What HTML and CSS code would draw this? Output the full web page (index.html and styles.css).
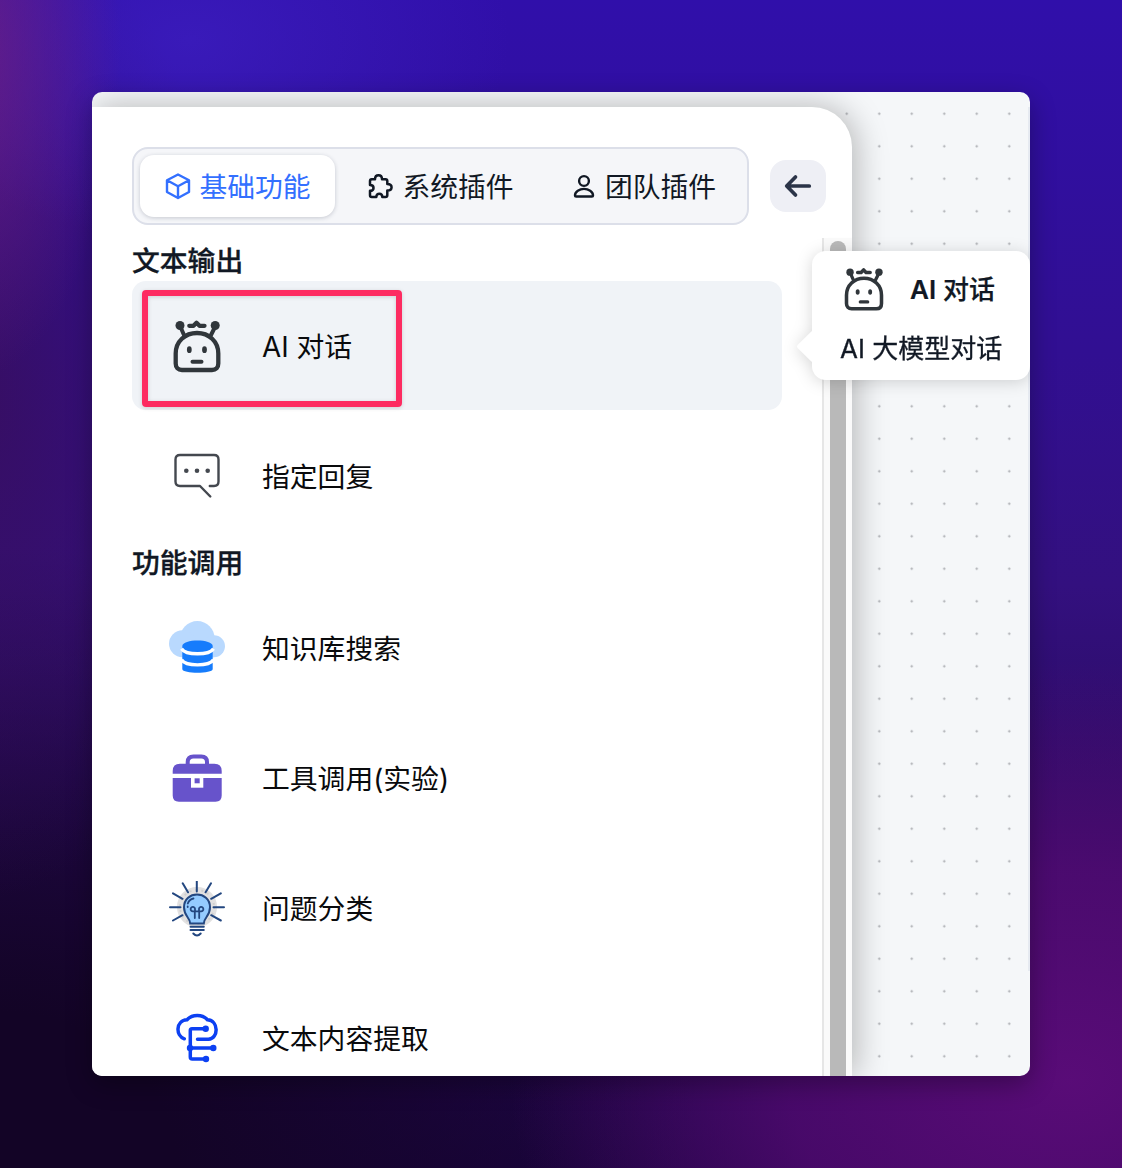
FILE: index.html
```html
<!DOCTYPE html>
<html lang="zh-CN">
<head>
<meta charset="utf-8">
<title>基础功能</title>
<link rel="stylesheet" href="styles.css">
</head>
<body>
<svg class="defs" aria-hidden="true">
  <symbol id="robot" viewBox="0 0 56 56">
    <g fill="none" stroke="#30363b" stroke-width="4.3" stroke-linecap="round" stroke-linejoin="round">
      <path d="M6.700 35.500C6.700 23.500 16 15 28 15S49.300 23.500 49.300 35.500V45.500C49.300 49.500 47 52 43 52H13C9 52 6.700 49.500 6.700 45.500Z"/>
      <path d="M11.500 9L15 17M46 9L42 17" stroke-width="4"/>
      <path d="M20.300 7.800H24.500L27.500 4.700L30.500 7.800H35.500" stroke-width="4.300"/>
      <path d="M23.500 43.700H32.500" stroke-width="4"/>
    </g>
    <g fill="#30363b"><circle cx="11" cy="7.500" r="4.500"/><circle cx="46.200" cy="7.500" r="4.500"/><ellipse cx="20.300" cy="31.700" rx="2.400" ry="3.400"/><ellipse cx="35.500" cy="31.700" rx="2.400" ry="3.400"/></g>
  </symbol>
</svg>
<main class="window">
  <aside class="panel">
    <header class="header">
      <nav class="tabs">
        <button class="tab active">
          <svg width="26" height="28" viewBox="0 0 26 28" fill="none" stroke="currentColor" stroke-width="2.400" stroke-linejoin="round" stroke-linecap="round"><path d="M13 2.500L24 8.300V20L13 26L2 20V8.300ZM2.500 8.500L13 14.300L23.500 8.500M13 14.300V26"/></svg>
          <span>基础功能</span>
        </button>
        <button class="tab">
          <svg width="26" height="28" viewBox="0 0 26 28" fill="none" stroke="currentColor" stroke-width="2.500" stroke-linejoin="round"><path d="M7 7.300C7 1.800 14 1.800 14 7.300H17.500Q19.300 7.300 19.300 9V12C25 12 25 18.500 19.300 18.500V23.300Q19.300 25 17.500 25H14.300C14.300 20.500 8.300 20.500 8.300 25H3.700Q2 25 2 23.300V18.800C6.700 18.800 6.700 13 2 13V9Q2 7.300 3.700 7.300Z"/></svg>
          <span>系统插件</span>
        </button>
        <button class="tab">
          <svg width="24" height="28" viewBox="0 0 24 28" fill="none" stroke="currentColor" stroke-width="2.400" stroke-linejoin="round"><circle cx="12" cy="9" r="4.900"/><path d="M12 16.900C7.500 16.900 3 19.700 3 23.200Q3 24.500 4.300 24.500H19.700Q21 24.500 21 23.200C21 19.700 16.500 16.900 12 16.900Z"/></svg>
          <span>团队插件</span>
        </button>
      </nav>
      <button class="back" aria-label="返回">
        <svg width="28" height="24" viewBox="0 0 28 24" fill="none" stroke="#2b3448" stroke-width="3.700" stroke-linecap="round" stroke-linejoin="round"><path d="M11.500 3L2.700 12L11.500 21M3.500 12H25.300"/></svg>
      </button>
    </header>
    <div class="scroller">
      <div class="list">
        <h2 class="first">文本输出</h2>
        <div class="row selected"><svg class="icon"><use href="#robot"/></svg><span>AI 对话</span><i class="highlight"></i></div>
        <div class="row reply">
          <svg class="icon" viewBox="0 0 56 56" fill="none" stroke="#44484f" stroke-width="2.400" stroke-linecap="round" stroke-linejoin="round"><path d="M41.300 48.500L31 38H11Q6.500 38 6.500 33.500V11.500Q6.500 7 11 7H45Q49.500 7 49.500 11.500V33.500Q49.500 38 45 38H40.800"/><g fill="#44484f" stroke="none"><circle cx="17.300" cy="22.700" r="2.300"/><circle cx="28" cy="22.700" r="2.300"/><circle cx="38.700" cy="22.700" r="2.300"/></g></svg>
          <span>指定回复</span>
        </div>
        <h2>功能调用</h2>
        <div class="row">
          <svg class="icon" viewBox="0 0 56 56"><g fill="#b9d9fe"><circle cx="28.300" cy="17.400" r="17.300"/><circle cx="13.500" cy="22.800" r="13.500"/><circle cx="45" cy="25.300" r="11"/><path d="M13.500 22H45V36.300H13.500Z"/></g><path fill="#167cfc" d="M13.300 25C13.300 17.500 43.700 17.500 43.700 25V48C43.700 53 13.300 53 13.300 48Z"/><path d="M12.500 27.700C17 34.500 40 34.500 44.500 27.700M12.500 38.800C17 45.600 40 45.600 44.500 38.800" fill="none" stroke="#fff" stroke-width="3.400"/></svg>
          <span>知识库搜索</span>
        </div>
        <div class="row">
          <svg class="icon" viewBox="0 0 56 56" fill="#6753cb"><path d="M18.700 14V11Q18.700 5.400 24.500 5.400H32.300Q38 5.400 38 11V14" fill="none" stroke="#6753cb" stroke-width="4"/><path d="M3.700 22.700V20Q3.700 12.700 11 12.700H45.400Q52.700 12.700 52.700 20V22.700ZM3.700 27H52.700V44.500Q52.700 50.700 46.500 50.700H9.900Q3.700 50.700 3.700 44.500Z"/><path fill="#fff" d="M22 26H34.300V36.700H22Z"/><path d="M25.600 27.300H30.700V32.300H25.600Z"/></svg>
          <span>工具调用(实验)</span>
        </div>
        <div class="row">
          <svg class="icon" viewBox="0 0 56 56" fill="none" stroke="#234780" stroke-width="2" stroke-linecap="round"><circle cx="28" cy="26" r="16.500" stroke="#e2e1e1" stroke-width="7"/><circle cx="28" cy="26" r="17" stroke="#cfcfd0" stroke-width="2" stroke-dasharray="2 4" stroke-linecap="butt"/><path d="M27.800 0V10.500M13.700 2.300L19 11.300M42 2.300L36.600 11.300M4 12.300L13.500 17.800M51.800 12.300L42.200 17.800M1 26.300H11.500M44.500 26.300H55M4 39.500L13.500 34.200M51.800 39.500L42.200 34.200"/><path fill="#94cbff" d="M21.200 42.500C21.200 36.500 15 35.500 15 26.300C15 9.200 41 9.200 41 26.300C41 35.500 34.800 36.500 34.800 42.500Z"/><path d="M18.800 22.500Q20.200 18.500 24.500 17.500M18.700 25.500V26M25.800 37V30M30.200 37V30M26 30.300H23.800A2.200 2.200 0 1 1 26 28.500V30.300H30V28.500A2.200 2.200 0 1 1 32.200 30.300H30" stroke-width="1.800"/><path d="M21.500 45.700H34.800M21.500 49H34.800M24.300 52.500Q28 56.500 31.700 52.500"/></svg>
          <span>问题分类</span>
        </div>
        <div class="row">
          <svg class="icon" viewBox="0 0 56 56" fill="none" stroke="#0c40f2" stroke-width="3.500" stroke-linecap="round" stroke-linejoin="round"><path d="M15.300 27.800C6.500 25 6.500 9.500 18 8.800C23 3 33.500 3 38.500 8.800C49.800 9.500 49.800 27.500 39.500 28.300H28.500M36.700 17.700H23Q21.300 17.700 21.300 19.500V46Q21.300 48 23.300 48H37M21.300 37H44"/><g fill="#0c40f2" stroke="none"><circle cx="36.700" cy="17.700" r="3.200"/><circle cx="44.300" cy="37" r="3.200"/><circle cx="21" cy="37" r="3.200"/><circle cx="37" cy="48" r="3.200"/></g></svg>
          <span>文本内容提取</span>
        </div>
      </div>
      <div class="track"><div class="thumb"></div></div>
    </div>
  </aside>
  <div class="canvas"></div>
  <div class="tooltip">
    <div class="tip-title"><svg class="tip-icon"><use href="#robot"/></svg><strong><b>AI</b> 对话</strong></div>
    <p>AI 大模型对话</p>
  </div>
</main>
</body>
</html>
```
FILE: styles.css
```css
* { box-sizing: border-box; }
body {
  margin: 0;
  width: 1122px;
  height: 1168px;
  padding: 92px;
  overflow: hidden;
  font-family: Inter, "Noto Sans CJK SC", sans-serif;
  line-height: 1.4;
  color: #111824;
  background:
    radial-gradient(ellipse 150px 330px at -30px 50px, rgba(112, 32, 130, .8), transparent),
    radial-gradient(ellipse 320px 200px at 190px 40px, rgba(62, 32, 195, .65), transparent),
    radial-gradient(ellipse 260px 500px at -20px 400px, rgba(56, 14, 88, .8), transparent),
    radial-gradient(ellipse 560px 420px at 1070px 1080px, rgba(92, 12, 122, .95), rgba(86, 11, 118, .75) 50%, transparent),
    radial-gradient(ellipse 700px 620px at 0 1168px, #130426 25%, transparent),
    linear-gradient(to bottom, #300faa 0, #310f92 30%, #33107f 50%, #280a59 75%, #1b0440);
}
.defs { position: absolute; width: 0; height: 0; }
button { border: 0; padding: 0; background: none; font: inherit; color: inherit; }
svg { display: block; flex: none; }
.window {
  position: relative;
  width: 938px;
  height: 984px;
  padding-top: 15px;
  display: flex;
  overflow: hidden;
  border-radius: 10px;
  background-color: #f5f7f9;
  background-image: radial-gradient(circle at 16.250px 16.250px, #a9abb0 .7px, transparent 1.500px);
  background-size: 32.500px 32.500px;
  background-position: -9px 5.500px;
}
body::before {
  content: "";
  position: absolute;
  inset: 92px;
  width: 938px;
  height: 984px;
  border-radius: 10px;
  box-shadow: 0 8px 26px rgba(0, 0, 0, .32);
}
.panel {
  width: 760px;
  flex: none;
  padding: 40px 0 0 40px;
  display: flex;
  flex-direction: column;
  border-top-right-radius: 40px;
  background: #fff;
  box-shadow: 4px 0 32px rgba(0, 0, 0, .27);
}
.canvas { flex: 1; margin: 0 0 105px; border-right: 2px solid #e6eaf1; }
.header { display: flex; align-items: center; gap: 21px; height: 78px; flex: none; }
.tabs {
  display: flex;
  gap: 8px;
  width: 617px;
  height: 78px;
  padding: 6px;
  border: 2px solid #dcdfe9;
  border-radius: 16px;
  background: #f5f6f9;
}
.tab {
  flex: 1;
  height: 62px;
  padding-left: 1px;
  display: flex;
  align-items: center;
  justify-content: center;
  gap: 8px;
  border-radius: 14px;
  font-size: 27.800px;
  white-space: nowrap;
}
.tab:last-child { gap: 9px; }
.tab span { padding-top: 3px; }
.tab.active { color: #3370ff; background: #fff; box-shadow: 0 1px 4px rgba(30, 40, 70, .22); }
.back {
  width: 56px;
  height: 52px;
  display: grid;
  place-items: center;
  border-radius: 16px;
  background: #eeeff5;
}
.scroller { flex: 1; display: flex; justify-content: space-between; margin-top: 13px; min-height: 0; }
.list { width: 650px; }
h2 {
  height: 43px;
  margin: 0;
  font-size: 27.800px;
  line-height: 45px;
  font-weight: 500;
  -webkit-text-stroke: .3px currentColor;
}
h2.first { line-height: 47px; }
.row {
  position: relative;
  height: 130px;
  padding-left: 37px;
  display: flex;
  align-items: center;
  gap: 37px;
  border-radius: 14px;
  color: #090a0c;
  font-size: 27.800px;
}
.selected { height: 129px; margin-bottom: 1px; background: #f0f3f7; }
.selected span { padding-top: 4px; }
.reply span { padding-top: 2px; }
.icon { width: 56px; height: 56px; }
.highlight {
  position: absolute;
  left: 10px;
  top: 9px;
  width: 260px;
  height: 117px;
  border: 6px solid #fd2b61;
  border-radius: 4px;
  box-shadow: 0 1px 4px rgba(0, 0, 0, .15), inset 0 1px 4px rgba(0, 0, 0, .15);
}
.track { width: 30px; padding: 3px 6px 0; border-left: 2px solid #e6e6e6; background: #fafafa; }
.thumb { width: 16px; height: 100%; border-radius: 8px 8px 0 0; background: #b9b9b9; }
.tooltip {
  position: absolute;
  left: 720px;
  top: 159px;
  width: 218px;
  height: 129px;
  padding: 15px 0 0 28px;
  border-radius: 14px;
  background: #fff;
  font-size: 26px;
  filter: drop-shadow(0 2px 8px rgba(0, 0, 0, .16));
}
.tooltip::before {
  content: "";
  position: absolute;
  left: -11px;
  top: 84px;
  width: 23px;
  height: 23px;
  border-radius: 2px;
  background: #fff;
  transform: rotate(45deg);
}
.tip-title { display: flex; align-items: center; gap: 23px; height: 46px; padding-left: 1px; }
.tip-icon { width: 46px; height: 46px; }
.tip-title strong { padding-top: 3px; font-weight: 500; -webkit-text-stroke: .2px currentColor; }
.tip-title b { font-weight: 600; }
.tooltip p { margin: 17px 0 0; line-height: 40px; white-space: nowrap; position: relative; -webkit-text-stroke: .3px currentColor; }
```
